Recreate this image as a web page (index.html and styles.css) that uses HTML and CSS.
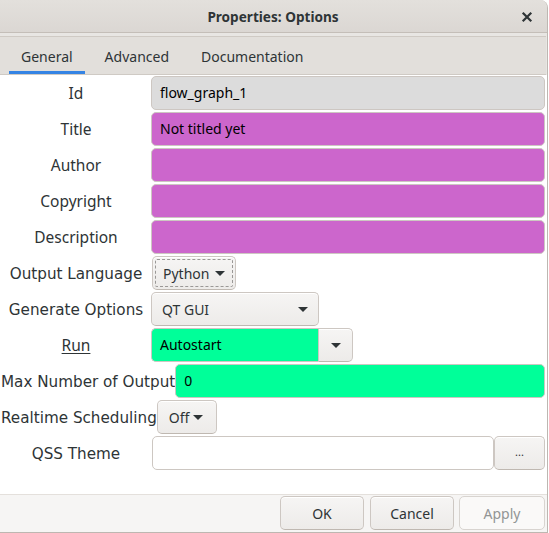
FILE: index.html
```html
<!DOCTYPE html>
<html>
<head>
<meta charset="utf-8">
<link rel="stylesheet" href="styles.css">
</head>
<body>
<div class="window">
  <header class="titlebar">
    <span class="title">Properties: Options</span>
    <svg class="close" width="12" height="12" viewBox="0 0 12 12"><path d="M2.5 2.5 L9.5 9.5 M9.5 2.5 L2.5 9.5" stroke="#2e3436" stroke-width="2.2" stroke-linecap="square"/></svg>
  </header>
  <nav class="tabs">
    <span class="tab active">General</span>
    <span class="tab">Advanced</span>
    <span class="tab">Documentation</span>
  </nav>
  <main class="content">
    <div class="row">
      <span class="lbl a">Id</span>
      <div class="entry grey">flow_graph_1</div>
    </div>
    <div class="row">
      <span class="lbl a">Title</span>
      <div class="entry magenta">Not titled yet</div>
    </div>
    <div class="row">
      <span class="lbl a">Author</span>
      <div class="entry magenta"></div>
    </div>
    <div class="row">
      <span class="lbl a">Copyright</span>
      <div class="entry magenta"></div>
    </div>
    <div class="row">
      <span class="lbl a">Description</span>
      <div class="entry magenta"></div>
    </div>
    <div class="row">
      <span class="lbl b">Output Language</span>
      <div class="btn combo focus w-python"><span>Python</span><i class="arrow"></i></div>
    </div>
    <div class="row">
      <span class="lbl b">Generate Options</span>
      <div class="btn combo w-gen"><span>QT GUI</span><i class="arrow"></i></div>
    </div>
    <div class="row">
      <span class="lbl a"><u>Run</u></span>
      <div class="entry green left w-run">Autostart</div>
      <div class="btn drop"><i class="arrow"></i></div>
    </div>
    <div class="row">
      <span class="lbl b">Max Number of Output</span>
      <div class="entry green">0</div>
    </div>
    <div class="row">
      <span class="lbl b">Realtime Scheduling</span>
      <div class="btn combo w-off"><span>Off</span><i class="arrow"></i></div>
    </div>
    <div class="row">
      <span class="lbl b">QSS Theme</span>
      <div class="entry white w-qss"></div>
      <div class="btn dots">...</div>
    </div>
  </main>
  <footer class="actions">
    <div class="btn act w-ok">OK</div>
    <div class="btn act w-cancel">Cancel</div>
    <div class="btn act disabled w-apply">Apply</div>
  </footer>
</div>
</body>
</html>
```

FILE: styles.css
```css
* { box-sizing: border-box; }
html, body { margin: 0; padding: 0; background: #ffffff; }
body { font-family: "Noto Sans", "DejaVu Sans", sans-serif; color: #2e3436; }

.window {
  width: 548px;
  height: 533px;
  display: flex;
  flex-direction: column;
  background: #e8e6e3;
  border-right: 1px solid #bdb7b1;
  border-bottom: 1px solid #bdb7b1;
  border-top-right-radius: 8px;
  overflow: hidden;
}

.titlebar {
  height: 33px;
  flex: none;
  display: flex;
  align-items: center;
  justify-content: center;
  position: relative;
  background: linear-gradient(#e3e0dc, #dbd7d3);
  border-bottom: 1px solid #c4beb8;
}
.title { font-weight: 700; font-size: 13.6px; margin-left: -1px; margin-top: 1px; }
.close { position: absolute; right: 14px; top: 11px; }

.tabs {
  flex: none;
  margin-top: 3px;
  height: 39px;
  display: flex;
  gap: 8px;
  padding-left: 9px;
  background: #e2dfdb;
  border-top: 1px solid #cfcac4;
  border-bottom: 1px solid #cfcac4;
  margin-right: 1px;
}
.tab {
  font-size: 14px;
  line-height: 20px;
  padding: 10px 12px 4px;
  border-bottom: 3px solid transparent;
  color: #2e3436;
}
.tab.active { border-bottom-color: #3584e4; }

.content {
  flex: 1;
  background: #ffffff;
  padding: 1px 2px 0 0;
  display: flex;
  flex-direction: column;
  gap: 2px;
}
.row { height: 34px; display: flex; align-items: center; }

.lbl {
  min-width: 151px;
  padding: 0 0 0 1px;
  text-align: center;
  white-space: nowrap;
  color: #2e3436;
}
.lbl.a { font-family: "Noto Sans", sans-serif; font-size: 15.5px; }
.lbl.b { font-family: "DejaVu Sans", sans-serif; font-size: 15.2px; padding-top: 1px; }
.lbl u { text-underline-offset: 2px; }

.entry {
  height: 34px;
  flex: 1;
  border: 1px solid #cdc7c2;
  border-radius: 5px;
  padding: 0 8px;
  font-size: 14px;
  line-height: 32px;
  color: #000;
}
.entry.grey { background: #dcdcdc; }
.entry.magenta { background: #cc66cc; }
.entry.green { background: #00ff99; }
.entry.white { background: #fff; }
.entry.left { border-radius: 5px 0 0 5px; border-right: none; }
.w-run { flex: none; width: 167px; }
.w-qss { flex: none; width: 342px; margin-left: 1px; }

.btn {
  height: 34px;
  display: flex;
  align-items: center;
  border: 1px solid #cdc7c2;
  border-bottom-color: #bfb8b1;
  border-radius: 5px;
  background: linear-gradient(#f6f5f4, #edebe9);
  box-shadow: inset 0 1px #ffffff;
  font-size: 14px;
  color: #2e3436;
  flex: none;
}
.combo { justify-content: space-between; padding: 0 10px 0 10px; }
.focus { outline: 1px dashed #9a9896; outline-offset: -4px; }
.w-python { width: 84px; margin-left: 1px; }
.w-gen { width: 168px; padding-right: 10px; }
.w-off { width: 60px; padding: 0 13px 0 11px; }
.combo span { color: #2e3436; }

.arrow {
  display: block;
  width: 0; height: 0;
  border-left: 5px solid transparent;
  border-right: 5px solid transparent;
  border-top: 5px solid #2e3436;
}
.drop { width: 35px; justify-content: center; border-radius: 0 5px 5px 0; }
.dots {
  width: 51px;
  justify-content: center;
  font-size: 11px;
  padding-bottom: 4px;
}

.actions {
  flex: none;
  height: 38px;
  background: #f6f5f4;
  border-top: 1px solid #e4e0dc;
  display: flex;
  justify-content: flex-end;
  align-items: flex-start;
  padding: 1px 2px 0 0;
}
.act { justify-content: center; font-size: 14px; }
.w-ok { width: 84px; }
.w-cancel { width: 84px; margin-left: 6px; }
.w-apply { width: 86px; margin-left: 5px; }
.disabled {
  background: #faf9f8;
  color: #929595;
  border-color: #d8d4d0;
  box-shadow: none;
}
```
